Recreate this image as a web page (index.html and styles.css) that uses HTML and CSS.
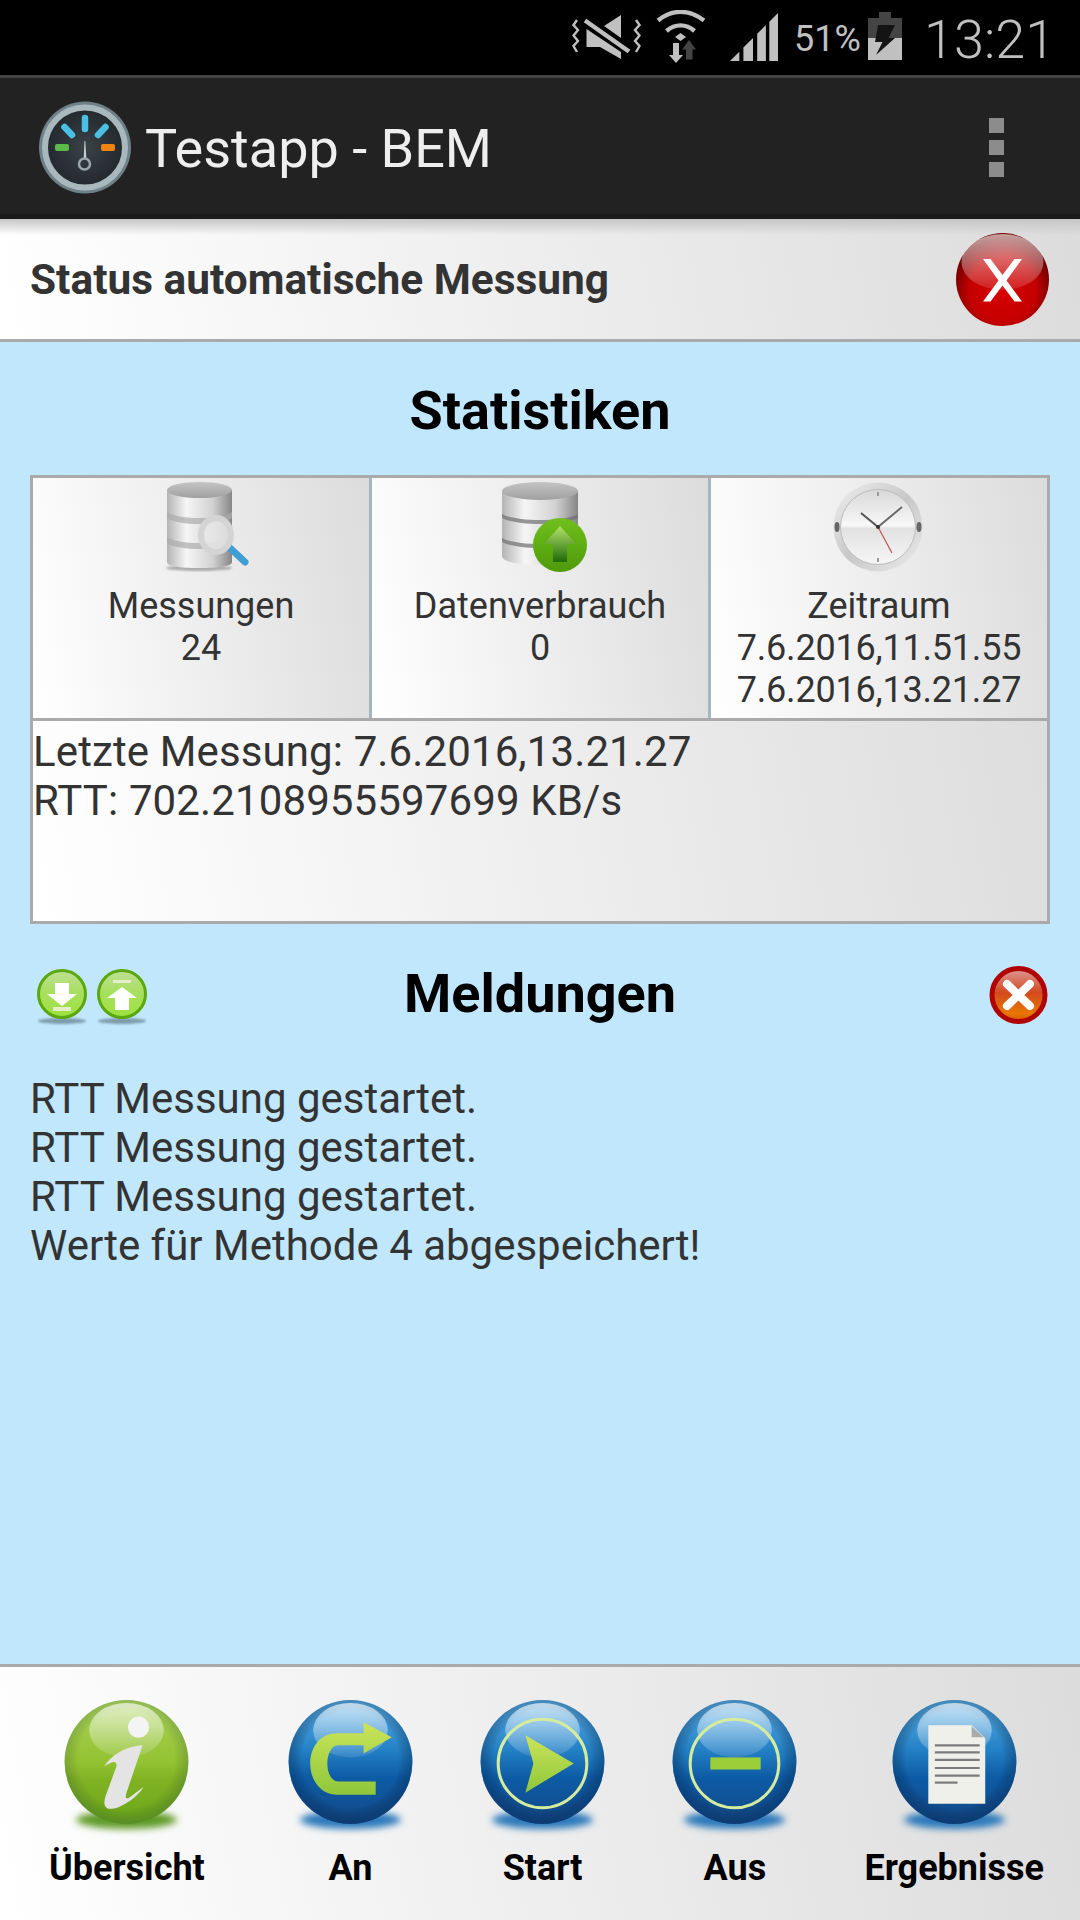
FILE: index.html
```html
<!DOCTYPE html>
<html lang="de">
<head>
    <meta charset="UTF-8">
    <title>Testapp - BEM</title>
    <link rel="stylesheet" href="styles.css">
</head>
<body>
    <!-- shared gradients for the glossy icons -->
    <svg class="svg-defs" aria-hidden="true">
        <defs>
            <linearGradient id="blue-ball" x1="0" y1="0" x2="0" y2="1">
                <stop offset="0" stop-color="#5cb0e8"/>
                <stop offset="0.4" stop-color="#2481c6"/>
                <stop offset="0.62" stop-color="#0d5ca6"/>
                <stop offset="1" stop-color="#134888"/>
            </linearGradient>
            <linearGradient id="green-ball" x1="0" y1="0" x2="0" y2="1">
                <stop offset="0" stop-color="#a9d25a"/>
                <stop offset="0.5" stop-color="#93c232"/>
                <stop offset="0.65" stop-color="#7fb223"/>
                <stop offset="1" stop-color="#6ba61a"/>
            </linearGradient>
            <radialGradient id="ball-edge" cx="0.5" cy="0.48" r="0.5">
                <stop offset="0.78" stop-color="#000" stop-opacity="0"/>
                <stop offset="1" stop-color="#03254d" stop-opacity="0.35"/>
            </radialGradient>
            <linearGradient id="gloss" x1="0" y1="0" x2="0" y2="1">
                <stop offset="0" stop-color="#fff" stop-opacity="0.65"/>
                <stop offset="1" stop-color="#fff" stop-opacity="0.1"/>
            </linearGradient>
            <linearGradient id="lime" x1="0" y1="0" x2="0" y2="1">
                <stop offset="0" stop-color="#cbe45a"/>
                <stop offset="1" stop-color="#8fc73a"/>
            </linearGradient>
            <radialGradient id="red-ball" cx="0.5" cy="0.62" r="0.55">
                <stop offset="0" stop-color="#d60000"/>
                <stop offset="0.65" stop-color="#c40000"/>
                <stop offset="1" stop-color="#6e0000"/>
            </radialGradient>
            <linearGradient id="red-gloss" x1="0" y1="0" x2="0" y2="1">
                <stop offset="0" stop-color="#fff" stop-opacity="0.62"/>
                <stop offset="1" stop-color="#fff" stop-opacity="0.12"/>
            </linearGradient>
            <linearGradient id="red-small" x1="0" y1="0" x2="0" y2="1">
                <stop offset="0" stop-color="#dd9a9a"/>
                <stop offset="0.45" stop-color="#d24a20"/>
                <stop offset="0.85" stop-color="#e87800"/>
                <stop offset="1" stop-color="#d05000"/>
            </linearGradient>
            <linearGradient id="green-small" x1="0" y1="0" x2="0" y2="1">
                <stop offset="0" stop-color="#bfe096"/>
                <stop offset="0.45" stop-color="#a8df60"/>
                <stop offset="1" stop-color="#9ce23c"/>
            </linearGradient>
            <linearGradient id="silver" x1="0" y1="0" x2="1" y2="0">
                <stop offset="0" stop-color="#b4b4b4"/>
                <stop offset="0.3" stop-color="#f6f6f6"/>
                <stop offset="0.7" stop-color="#d2d2d2"/>
                <stop offset="1" stop-color="#868686"/>
            </linearGradient>
            <linearGradient id="silver-top" x1="0" y1="0" x2="0" y2="1">
                <stop offset="0" stop-color="#c4c4c4"/>
                <stop offset="1" stop-color="#a0a0a0"/>
            </linearGradient>
            <linearGradient id="green-badge" x1="0" y1="0" x2="0" y2="1">
                <stop offset="0" stop-color="#6fc01c"/>
                <stop offset="1" stop-color="#4e9a0a"/>
            </linearGradient>
            <linearGradient id="arrow-green" x1="0" y1="0" x2="0" y2="1">
                <stop offset="0" stop-color="#b5e26c"/>
                <stop offset="1" stop-color="#1f6a08"/>
            </linearGradient>
            <linearGradient id="chrome" x1="0" y1="0" x2="1" y2="1">
                <stop offset="0" stop-color="#f0f0f0"/>
                <stop offset="0.5" stop-color="#c8c8c8"/>
                <stop offset="1" stop-color="#ececec"/>
            </linearGradient>
            <linearGradient id="clock-face" x1="0" y1="0" x2="0" y2="1">
                <stop offset="0" stop-color="#d8d8d8"/>
                <stop offset="0.48" stop-color="#f8f8f8"/>
                <stop offset="0.52" stop-color="#e2e2e2"/>
                <stop offset="1" stop-color="#f6f6f6"/>
            </linearGradient>
            <radialGradient id="gauge-face" cx="0.5" cy="0.5" r="0.5">
                <stop offset="0" stop-color="#3a4248"/>
                <stop offset="1" stop-color="#22282c"/>
            </radialGradient>
            <filter id="soft" x="-30%" y="-80%" width="160%" height="260%">
                <feGaussianBlur stdDeviation="3.5"/>
            </filter>
            <filter id="soft-small" x="-30%" y="-80%" width="160%" height="260%">
                <feGaussianBlur stdDeviation="1.2"/>
            </filter>
        </defs>
    </svg>

    <div class="status-bar">
        <svg class="ic-mute" width="69" height="44" viewBox="0 0 69 44">
            <path d="M49 0V23L32 11Z" fill="#c0c0c0"/>
            <path d="M14.5 14L49 37V44L28 32H14.5Z" fill="#c0c0c0"/>
            <path d="M13 5.5L57 36.5" stroke="#c0c0c0" stroke-width="4.5"/>
            <path d="M5 5L1.5 10L6 15L1.5 20.5L6 26L1.5 31L5 37" fill="none" stroke="#c0c0c0" stroke-width="2.4"/>
            <path d="M64 5L67.5 10L63 15L67.5 20.5L63 26L67.5 31L64 37" fill="none" stroke="#c0c0c0" stroke-width="2.4"/>
        </svg>
        <svg class="ic-wifi" width="50" height="54" viewBox="0 0 50 54">
            <path d="M2 10.5C16 -1 33 -1 48 10.5" fill="none" stroke="#c0c0c0" stroke-width="4.4"/>
            <path d="M10.5 21C19 13.5 30 13.5 38.5 21" fill="none" stroke="#c0c0c0" stroke-width="4.4"/>
            <path d="M19 27L24.5 23L30 27L24.5 31Z" fill="#c0c0c0"/>
            <path d="M17 33H23V45H27L20 53L13 45H17Z" fill="#c0c0c0"/>
            <path d="M30 49.5V39.500H26L33 30L40 39.500H36.500V49.500Z" fill="#444"/>
        </svg>
        <svg class="ic-signal" width="48" height="48" viewBox="0 0 48 48">
            <path d="M0 48L9.300 38.700V48Z" fill="#c0c0c0"/>
            <path d="M13.400 34.600L23 25V48H13.400Z" fill="#c0c0c0"/>
            <path d="M27.200 20.800L35.900 12.100V48H27.200Z" fill="#c0c0c0"/>
            <path d="M39.300 8.700L48 0V48H39.300Z" fill="#c0c0c0"/>
        </svg>
        <span class="battery-pct">51%</span>
        <svg class="ic-battery" width="34" height="48" viewBox="0 0 34 48">
            <path d="M11 0H23V6H34V26H0V6H11Z" fill="#444"/>
            <rect x="0" y="26" width="34" height="22" fill="#c0c0c0"/>
            <path d="M10 13H27L20.500 26H27L8 43L14.500 30H7Z" fill="#141414"/>
        </svg>
        <span class="clock">13:21</span>
    </div>

    <header class="action-bar">
        <svg class="app-icon soft-icon" width="92" height="93" viewBox="0 0 92 93">
            <circle cx="46" cy="46.500" r="46" fill="#6f8188"/>
            <circle cx="46" cy="46.500" r="40" fill="url(#gauge-face)" stroke="#a9b8bd" stroke-width="6"/>
            <path d="M46 17V28" stroke="#49c0e4" stroke-width="6.500" stroke-linecap="round"/>
            <path d="M25.500 26L33 34" stroke="#49c0e4" stroke-width="6.500" stroke-linecap="round"/>
            <path d="M66.500 26L59 34" stroke="#49c0e4" stroke-width="6.500" stroke-linecap="round"/>
            <rect x="16" y="43" width="14" height="7" rx="2" fill="#5cb848"/>
            <rect x="62" y="43" width="14" height="7" rx="2" fill="#f08410"/>
            <path d="M44.700 57L45.500 40L46.300 40L47.300 57Z" fill="#c8d0d2"/>
            <circle cx="45.500" cy="63" r="5.500" fill="none" stroke="#9aa8ac" stroke-width="2.500"/>
        </svg>
        <h1 class="app-title">Testapp - BEM</h1>
        <div class="overflow-menu">
            <span class="overflow-dot"></span>
            <span class="overflow-dot"></span>
            <span class="overflow-dot"></span>
        </div>
    </header>

    <div class="status-head">
        <span class="status-title">Status automatische Messung</span>
        <svg class="soft-icon" width="93" height="93" viewBox="0 0 93 93">
            <circle cx="46.500" cy="46.500" r="46.500" fill="url(#red-ball)"/>
            <ellipse cx="46.500" cy="29" rx="41" ry="28" fill="url(#red-gloss)"/>
            <path d="M27 26H34.500L46.500 42L58.500 26H66L50.500 47.500L66 68.500H58.500L46.500 52.500L34.500 68.500H27L42.500 47.500Z" fill="#fff"/>
        </svg>
    </div>

    <main class="content">
        <h2 class="section-title stats-title">Statistiken</h2>

        <section class="stats">
            <div class="stats-row">
                <div class="stat-cell">
                    <svg class="stat-icon soft-icon" width="90" height="90" viewBox="0 0 90 90">
                        <ellipse cx="38" cy="86" rx="33" ry="3" fill="#aaa" filter="url(#soft-small)"/>
                        <path d="M6 8H71V80C71 84 58 86 38 86C18 86 6 84 6 80Z" fill="url(#silver)"/>
                        <path d="M6 30C18 38 58 38 71 30V36C58 44 18 44 6 36Z" fill="#ababab" opacity="0.7"/>
                        <path d="M6 55C18 63 58 63 71 55V61C58 69 18 69 6 61Z" fill="#ababab" opacity="0.7"/>
                        <ellipse cx="38.500" cy="8" rx="32.500" ry="8" fill="url(#silver-top)"/>
                        <path d="M69 66L84 80" stroke="#3f9fd2" stroke-width="7" stroke-linecap="round"/>
                        <ellipse cx="55" cy="53" rx="15" ry="17" fill="#e8e8e8" fill-opacity="0.85" stroke="#d4d4d4" stroke-width="6"/>
                    </svg>
                    <div class="stat-text">Messungen<br>24</div>
                </div>
                <div class="stat-cell">
                    <svg class="stat-icon soft-icon" width="90" height="90" viewBox="0 0 90 90">
                        <path d="M2 9H78V74C78 80 60 83 40 83C20 83 2 80 2 74Z" fill="url(#silver)"/>
                        <path d="M2 32C16 40 64 40 78 32V36C64 44 16 44 2 36Z" fill="#6f6f6f" opacity="0.7"/>
                        <path d="M2 56C16 64 64 64 78 56V60C64 68 16 68 2 60Z" fill="#6f6f6f" opacity="0.7"/>
                        <ellipse cx="40" cy="9" rx="38" ry="9" fill="url(#silver-top)"/>
                        <ellipse cx="60" cy="63" rx="27" ry="27" fill="url(#green-badge)"/>
                        <path d="M60 44L76 62H67V80H53V62H44Z" fill="url(#arrow-green)"/>
                    </svg>
                    <div class="stat-text">Datenverbrauch<br>0</div>
                </div>
                <div class="stat-cell">
                    <svg class="stat-icon clock-icon soft-icon" width="90" height="90" viewBox="0 0 90 90">
                        <circle cx="45" cy="45" r="44.500" fill="url(#chrome)"/>
                        <circle cx="45" cy="45" r="37.500" fill="url(#clock-face)" stroke="#bdbdbd" stroke-width="1"/>
                        <ellipse cx="4" cy="45" rx="2.500" ry="5" fill="#666"/>
                        <ellipse cx="86" cy="45" rx="2.500" ry="5" fill="#666"/>
                        <path d="M45 10V14M45 76V80" stroke="#999" stroke-width="2"/>
                        <path d="M45 45L28 31" stroke="#555" stroke-width="2"/>
                        <path d="M45 45L69 25" stroke="#6a6a6a" stroke-width="2"/>
                        <path d="M45 45L59 71" stroke="#c05050" stroke-width="1.200"/>
                        <circle cx="45" cy="45" r="2" fill="#333"/>
                    </svg>
                    <div class="stat-text">Zeitraum<br><span class="stat-date">7.6.2016,11.51.55</span><br><span class="stat-date">7.6.2016,13.21.27</span></div>
                </div>
            </div>
            <div class="stats-last">Letzte Messung: 7.6.2016,13.21.27<br>RTT: 702.2108955597699 KB/s</div>
        </section>

        <div class="messages-head">
            <div class="messages-arrows">
                <svg class="soft-icon" width="50" height="58" viewBox="0 0 50 58">
                    <ellipse cx="25" cy="52" rx="24" ry="3" fill="#7e9cac" filter="url(#soft-small)"/>
                    <circle cx="25" cy="25" r="23.500" fill="url(#green-small)" stroke="#5aa80e" stroke-width="3"/>
                    <path d="M18 14H32V25H40L25 37L10 25H18Z" fill="#fff"/>
                    <rect x="16" y="38" width="18" height="4" fill="#e4eecb"/>
                </svg>
                <svg class="soft-icon" width="50" height="58" viewBox="0 0 50 58">
                    <ellipse cx="25" cy="52" rx="24" ry="3" fill="#7e9cac" filter="url(#soft-small)"/>
                    <circle cx="25" cy="25" r="23.500" fill="url(#green-small)" stroke="#5aa80e" stroke-width="3"/>
                    <path d="M18 41H32V29H40L25 18L10 29H18Z" fill="#fff"/>
                    <rect x="16" y="11" width="18" height="3" fill="#e4eecb"/>
                </svg>
            </div>
            <h2 class="section-title messages-title">Meldungen</h2>
            <svg class="messages-close soft-icon" width="59" height="58" viewBox="0 0 59 58">
                <circle cx="29.500" cy="29" r="26.500" fill="url(#red-small)" stroke="#b00404" stroke-width="5"/>
                <path d="M18 18L41 40M41 18L18 40" stroke="#fff" stroke-width="8" stroke-linecap="round"/>
            </svg>
        </div>

        <div class="messages">
            RTT Messung gestartet.<br>
            RTT Messung gestartet.<br>
            RTT Messung gestartet.<br>
            Werte für Methode 4 abgespeichert!
        </div>
    </main>

    <nav class="tab-bar">
        <div class="tab tab-first">
            <svg class="soft-icon" width="125" height="137" viewBox="0 0 124 136">
                <ellipse cx="62" cy="119" rx="50" ry="9" fill="#5f9a28" filter="url(#soft)"/>
                <circle cx="62" cy="61.500" r="61.500" fill="url(#green-ball)"/>
                <circle cx="62" cy="61.500" r="61.500" fill="url(#ball-edge)" opacity="0.5"/>
                <ellipse cx="62" cy="30" rx="37" ry="27" fill="url(#gloss)"/>
                <circle cx="74" cy="27" r="10.500" fill="#f4f4f4"/>
                <path d="M40 66C46 56 60 46 78 45L62 92C60 98 62 99 66 96L79 86C72 98 55 108 46 108C40 108 39 103 41 96L52 66C53 60 48 60 40 66Z" fill="#e4e4e4"/>
            </svg>
            <span class="tab-label">Übersicht</span>
        </div>
        <div class="tab">
            <svg class="soft-icon" width="125" height="137" viewBox="0 0 124 136">
                <ellipse cx="62" cy="119" rx="50" ry="9" fill="#2a78ba" filter="url(#soft)"/>
                <circle cx="62" cy="61.500" r="61.500" fill="url(#blue-ball)"/>
                <circle cx="62" cy="61.500" r="61.500" fill="url(#ball-edge)"/>
                <ellipse cx="62" cy="30" rx="37" ry="27" fill="url(#gloss)"/>
                <path d="M103 37L75 22V33H48C32 33 22 47 22 63C22 80 33 94 48 94H87V81H50C43 81 39 72 39 63C39 54 43 45 50 45H75V53Z" fill="url(#lime)"/>
            </svg>
            <span class="tab-label">An</span>
        </div>
        <div class="tab">
            <svg class="soft-icon" width="125" height="137" viewBox="0 0 124 136">
                <ellipse cx="62" cy="119" rx="50" ry="9" fill="#2a78ba" filter="url(#soft)"/>
                <circle cx="62" cy="61.500" r="61.500" fill="url(#blue-ball)"/>
                <circle cx="62" cy="61.500" r="61.500" fill="url(#ball-edge)"/>
                <ellipse cx="62" cy="30" rx="37" ry="27" fill="url(#gloss)"/>
                <circle cx="62" cy="63" r="44" fill="none" stroke="#d5ec9e" stroke-width="3"/>
                <path d="M45 35L93 63L45 92L53 63Z" fill="url(#lime)"/>
            </svg>
            <span class="tab-label">Start</span>
        </div>
        <div class="tab">
            <svg class="soft-icon" width="125" height="137" viewBox="0 0 124 136">
                <ellipse cx="62" cy="119" rx="50" ry="9" fill="#2a78ba" filter="url(#soft)"/>
                <circle cx="62" cy="61.500" r="61.500" fill="url(#blue-ball)"/>
                <circle cx="62" cy="61.500" r="61.500" fill="url(#ball-edge)"/>
                <ellipse cx="62" cy="30" rx="37" ry="27" fill="url(#gloss)"/>
                <circle cx="62" cy="63" r="44" fill="none" stroke="#d5ec9e" stroke-width="3"/>
                <rect x="38" y="57" width="50" height="12" fill="#9bcf39"/>
            </svg>
            <span class="tab-label">Aus</span>
        </div>
        <div class="tab">
            <svg class="soft-icon" width="125" height="137" viewBox="0 0 124 136">
                <ellipse cx="62" cy="119" rx="50" ry="9" fill="#2a78ba" filter="url(#soft)"/>
                <circle cx="62" cy="61.500" r="61.500" fill="url(#blue-ball)"/>
                <circle cx="62" cy="61.500" r="61.500" fill="url(#ball-edge)"/>
                <ellipse cx="62" cy="30" rx="37" ry="27" fill="url(#gloss)"/>
                <path d="M36 25H79L92.500 38V103H36Z" fill="#f0f0ea"/>
                <path d="M79 26L91 37H79Z" fill="#aaa"/>
                <path d="M42.500 45H87M42.500 52H87M42.500 59.500H87M42.500 67.500H87M42.500 75H87" stroke="#7b7b7b" stroke-width="2.200"/>
                <path d="M42.500 82H65" stroke="#7b7b7b" stroke-width="2.200"/>
            </svg>
            <span class="tab-label">Ergebnisse</span>
        </div>
    </nav>
</body>
</html>
```

FILE: styles.css
```css
* {
    box-sizing: border-box;
}

body {
    margin: 0;
    width: 1080px;
    height: 1920px;
    display: flex;
    flex-direction: column;
    font-family: Roboto, sans-serif;
    color: #333;
    background: #c1e7fc;
    overflow: hidden;
}

svg {
    display: block;
    flex: none;
}

.svg-defs {
    position: absolute;
    width: 0;
    height: 0;
}

/* the original icons are scaled up bitmaps */
.soft-icon {
    filter: blur(0.6px);
}

/* status bar */
.status-bar {
    height: 78px;
    flex: none;
    display: flex;
    background: #000;
    border-bottom: 3px solid #444;
    padding-left: 572px;
}

.ic-mute {
    margin-top: 15px;
}

.ic-wifi {
    margin: 10px 0 0 15px;
}

.ic-signal {
    margin: 13px 0 0 24px;
}

.battery-pct {
    margin: 18px 0 0 16px;
    width: 74px;
    font-size: 36px;
    line-height: 42px;
    color: #c0c0c0;
}

.ic-battery {
    margin-top: 12px;
}

.clock {
    margin: 8px 0 0 22px;
    font-size: 54px;
    line-height: 64px;
    font-weight: 300;
    color: #c0c0c0;
}

/* action bar */
.action-bar {
    height: 141px;
    flex: none;
    display: flex;
    align-items: center;
    padding: 3px 76px 0 39px;
    background: #222;
    border-bottom: 5px solid #1b1b1b;
}

.app-title {
    flex: 1;
    margin: 2px 0 0 14px;
    font-size: 54px;
    font-weight: 400;
    color: #eee;
}

.overflow-menu {
    display: flex;
    flex-direction: column;
    gap: 7px;
}

.overflow-dot {
    width: 15px;
    height: 15px;
    background: #8c8c8c;
}

/* head strip under the action bar */
.status-head {
    height: 123px;
    flex: none;
    display: flex;
    align-items: center;
    justify-content: space-between;
    padding: 0 31px 0 30px;
    background: linear-gradient(to bottom, #c6c6c6, rgba(198, 198, 198, 0) 16px), linear-gradient(80deg, #fff, #dcdcdc);
    border-bottom: 3px solid #aaa;
}

.status-title {
    font-size: 42.4px;
    font-weight: 700;
    color: #333;
}

/* main */
.content {
    flex: 1;
    padding-top: 41px;
}

.section-title {
    margin: 0;
    font-size: 54px;
    line-height: 56px;
    font-weight: 700;
    color: #000;
    text-align: center;
}

.stats-title {
    margin-bottom: 36px;
}

.stats {
    height: 449px;
    margin: 0 30px;
    border: 3px solid #aaa;
    background: linear-gradient(80deg, #fff, #dcdcdc);
}

.stats-row {
    height: 243px;
    display: grid;
    grid-template-columns: 336px 339px 339px;
    border-bottom: 3px solid #aaa;
}

.stat-cell {
    padding-top: 4px;
    text-align: center;
    background: linear-gradient(80deg, #fff, #dcdcdc);
}

.stat-cell + .stat-cell {
    border-left: 3px solid #a6b6be;
}

.stat-icon {
    margin-left: 128px;
}

.stat-icon.clock-icon {
    margin-left: 122px;
}

.stat-text {
    margin-top: 13px;
    font-size: 36px;
    line-height: 42px;
    color: #333;
}

.stat-date {
    letter-spacing: -0.2px;
}

.stats-last {
    padding-top: 6px;
    font-size: 42px;
    line-height: 49px;
    letter-spacing: 0.12px;
    color: #333;
}

.messages-head {
    height: 64px;
    margin-top: 42px;
    padding: 0 32px;
    display: grid;
    grid-template-columns: 1fr auto 1fr;
    align-items: center;
}

.messages-arrows {
    display: flex;
    gap: 10px;
    margin-left: 5px;
}

.messages-title {
    margin-top: -8px;
}

.messages-close {
    justify-self: end;
    margin-top: -6px;
}

.messages {
    margin-top: 44px;
    padding-left: 30px;
    font-size: 42px;
    line-height: 49px;
    color: #333;
}

/* bottom buttons */
.tab-bar {
    height: 256px;
    flex: none;
    display: flex;
    justify-content: space-between;
    padding: 33px 36px 0 49px;
    background: linear-gradient(80deg, #fff, #dcdcdc);
    border-top: 3px solid #aaa;
}

.tab {
    display: flex;
    flex-direction: column;
    align-items: center;
}

.tab-first {
    margin-right: 16px;
}

.tab-label {
    margin-top: 10px;
    font-size: 36px;
    line-height: 42px;
    font-weight: 700;
    color: #000;
    white-space: nowrap;
}
```
